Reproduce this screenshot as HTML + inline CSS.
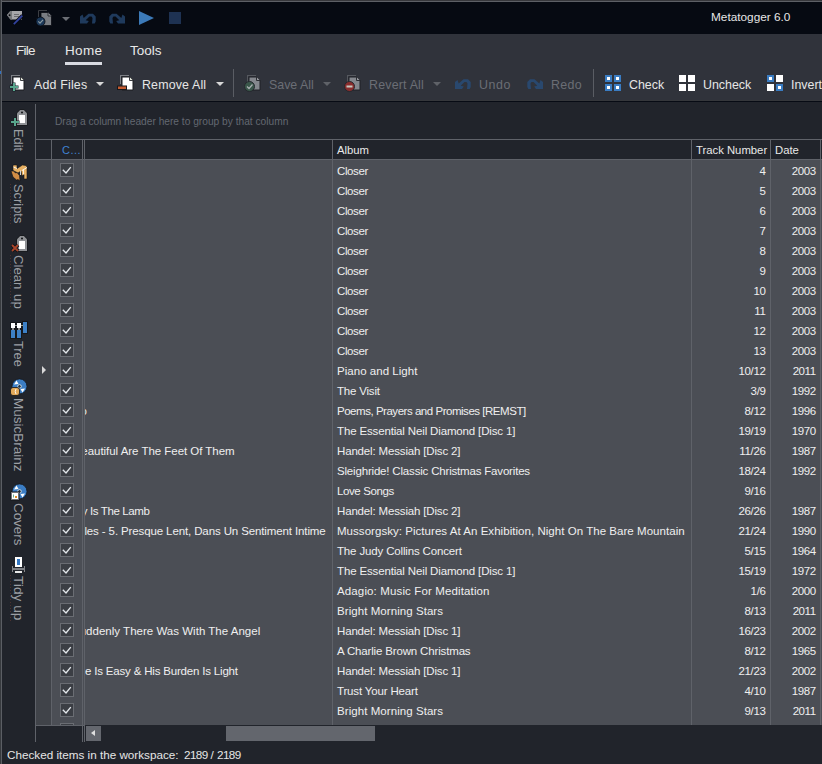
<!DOCTYPE html>
<html><head><meta charset="utf-8">
<style>
html,body{margin:0;padding:0;width:822px;height:764px;overflow:hidden;background:#21242b;}
body{position:relative;font-family:"Liberation Sans",sans-serif;color:#e4e4e4;}
.a{position:absolute;}
#titlebar{position:absolute;left:0;top:0;width:822px;height:34px;background:#060a12;}
#menubar{position:absolute;left:0;top:34px;width:822px;height:66px;background:#30333b;}
#ribline{position:absolute;left:0;top:101px;width:822px;height:1px;background:#070b14;}
#ribhl{position:absolute;left:0;top:100px;width:822px;height:1px;background:#35373b;}
#bl{position:absolute;left:0;top:0;width:1px;height:764px;background:#373a3e;}
#bl2{position:absolute;left:1px;top:0;width:1px;height:764px;background:#5b5e64;}
#bt{position:absolute;left:0;top:0;width:822px;height:1px;background:#37383c;}
#bt2{position:absolute;left:1px;top:1px;width:821px;height:1px;background:#5d6066;}
.menu{position:absolute;top:42px;font-size:13.5px;color:#e8e8e8;line-height:18px;white-space:nowrap;}
.rb{position:absolute;top:77px;font-size:12.4px;line-height:16px;white-space:nowrap;color:#e6e6e6;}
.rb.dis{color:#6b6e75;}
.tri{position:absolute;width:0;height:0;border-left:4px solid transparent;border-right:4px solid transparent;border-top:4px solid #d8d8d8;}
.tri.dis{border-top-color:#5f6268;}
.sep{position:absolute;top:69px;width:1px;height:28px;background:#5a5d64;}
.ico{position:absolute;}
/* grid */
.gl{position:absolute;background:#5f6269;}
.rows{position:absolute;left:36px;top:160px;width:786px;height:565px;background:#4b4e55;overflow:hidden;}
.ind{position:absolute;left:36px;top:160px;width:15px;height:565px;background:#404349;}
.chk{position:absolute;left:60px;width:14px;height:14px;}
.chk svg{display:block;}
.tt{position:absolute;height:20px;line-height:20px;font-size:11.5px;text-align:right;white-space:nowrap;color:#efefef;}
.al{position:absolute;left:337px;height:20px;line-height:20px;font-size:11.5px;white-space:nowrap;color:#efefef;}
.tn{position:absolute;left:691px;width:74.7px;letter-spacing:-0.3px;text-align:right;height:20px;line-height:20px;font-size:11.5px;white-space:nowrap;color:#efefef;}
.dt{position:absolute;left:771px;width:44.6px;letter-spacing:-0.45px;text-align:right;height:20px;line-height:20px;font-size:11.5px;white-space:nowrap;color:#efefef;}
.cur{position:absolute;left:42px;width:0;height:0;border-top:4px solid transparent;border-bottom:4px solid transparent;border-left:4px solid #d8d8d8;}
.hd{position:absolute;top:141px;height:19px;line-height:19px;font-size:11.3px;white-space:nowrap;color:#e8e8e8;}
.vt{position:absolute;font-size:12.5px;color:#9c9fa4;white-space:nowrap;transform-origin:0 0;transform:rotate(90deg);line-height:14px;}
</style></head><body>
<div id="titlebar"></div>
<div id="menubar"></div>
<div id="ribhl"></div>
<div id="ribline"></div>
<div id="bt"></div>
<div id="bt2"></div>
<div id="bl"></div>
<div id="bl2"></div>

<!-- title bar icons -->
<div class="a" style="left:711px;top:10px;font-size:11.8px;line-height:14px;color:#e6e6e6;">Metatogger 6.0</div>

<!-- menu -->
<div class="menu" style="left:16px;letter-spacing:-0.75px;">File</div>
<div class="menu" style="left:65px;letter-spacing:0.35px;">Home</div>
<div class="a" style="left:65px;top:62px;width:37px;height:3px;background:#d9dbe2;"></div>
<div class="menu" style="left:130px;">Tools</div>

<!-- ribbon -->
<div class="rb" style="left:34px;letter-spacing:0.18px;">Add Files</div>
<div class="tri" style="left:96px;top:82px;"></div>
<div class="rb" style="left:142px;letter-spacing:0.16px;">Remove All</div>
<div class="tri" style="left:216px;top:82px;"></div>
<div class="sep" style="left:233px;"></div>
<div class="rb dis" style="left:269px;">Save All</div>
<div class="tri dis" style="left:323px;top:82px;"></div>
<div class="rb dis" style="left:369px;letter-spacing:0.2px;">Revert All</div>
<div class="tri dis" style="left:433px;top:82px;"></div>
<div class="rb dis" style="left:479px;letter-spacing:0.55px;">Undo</div>
<div class="rb dis" style="left:551px;letter-spacing:0.3px;">Redo</div>
<div class="sep" style="left:593px;"></div>
<div class="rb" style="left:629px;">Check</div>
<div class="rb" style="left:703px;">Uncheck</div>
<div class="rb" style="left:791px;">Invert</div>

<!-- sidebar line -->
<div class="gl" style="left:35px;top:104px;width:1px;height:638px;"></div>

<!-- group panel text -->
<div class="a" style="left:55px;top:116px;font-size:10.2px;line-height:12px;color:#636871;white-space:nowrap;">Drag a column header here to group by that column</div>

<!-- grid -->
<div class="rows" style="height:565px;"></div>
<div class="ind"></div>
<div class="a" style="left:52px;top:160px;width:30px;height:565px;background:#4b4e55;"></div>
<div class="gl" style="left:36px;top:139px;width:786px;height:1px;"></div>
<div class="gl" style="left:36px;top:159px;width:786px;height:1px;"></div>
<div class="gl" style="left:36px;top:725px;width:49px;height:1px;"></div>
<div class="gl" style="left:51px;top:140px;width:1px;height:585px;"></div>
<div class="gl" style="left:82px;top:140px;width:1px;height:602px;"></div>
<div class="gl" style="left:84px;top:140px;width:1px;height:602px;"></div>
<div class="gl" style="left:332px;top:140px;width:1px;height:585px;"></div>
<div class="gl" style="left:691px;top:140px;width:1px;height:585px;"></div>
<div class="gl" style="left:770px;top:140px;width:1px;height:585px;"></div>
<div class="gl" style="left:820px;top:140px;width:1px;height:585px;"></div>

<div class="hd" style="left:62px;color:#3f82d2;font-size:11px;">C…</div>
<div class="hd" style="left:337px;">Album</div>
<div class="hd" style="left:696px;">Track Number</div>
<div class="hd" style="left:775px;">Date</div>

<div class="a" style="left:85px;top:160px;width:247px;height:565px;overflow:hidden;">
<div class="a" style="left:-85px;top:-160px;width:400px;height:800px;">
<div class="tt" style="top:441px;left:81.34px;text-align:left;letter-spacing:-0.034px">eautiful Are The Feet Of Them</div>
<div class="tt" style="top:501px;left:81.84px;text-align:left;letter-spacing:-0.392px">y Is The Lamb</div>
<div class="tt" style="top:521px;left:84.4px;text-align:left;letter-spacing:-0.118px">les - 5. Presque Lent, Dans Un Sentiment Intime</div>
<div class="tt" style="top:621px;left:79.69px;text-align:left;letter-spacing:0.016px">uddenly There Was With The Angel</div>
<div class="tt" style="top:661px;left:85.0px;text-align:left;letter-spacing:-0.184px">e Is Easy &amp; His Burden Is Light</div>
<div class="tt" style="top:401px;left:80.5px;text-align:left;letter-spacing:0px">o</div>
</div></div>
<div class="a" style="left:0;top:160px;width:822px;height:565px;overflow:hidden;"><div class="a" style="left:0;top:-160px;width:822px;height:764px;">
<div class="chk" style="top:163px"><svg width="14" height="14" viewBox="0 0 14 14"><rect x="0.5" y="0.5" width="13" height="13" fill="#3b3e44" stroke="#6a6d73"/><path d="M2.8 6.8 L6 10 L10.8 4.1" fill="none" stroke="#e4e8ec" stroke-width="1.35"/></svg></div>
<div class="al" style="top:161px;letter-spacing:-0.4px">Closer</div>
<div class="tn" style="top:161px">4</div>
<div class="dt" style="top:161px">2003</div>
<div class="chk" style="top:183px"><svg width="14" height="14" viewBox="0 0 14 14"><rect x="0.5" y="0.5" width="13" height="13" fill="#3b3e44" stroke="#6a6d73"/><path d="M2.8 6.8 L6 10 L10.8 4.1" fill="none" stroke="#e4e8ec" stroke-width="1.35"/></svg></div>
<div class="al" style="top:181px;letter-spacing:-0.4px">Closer</div>
<div class="tn" style="top:181px">5</div>
<div class="dt" style="top:181px">2003</div>
<div class="chk" style="top:203px"><svg width="14" height="14" viewBox="0 0 14 14"><rect x="0.5" y="0.5" width="13" height="13" fill="#3b3e44" stroke="#6a6d73"/><path d="M2.8 6.8 L6 10 L10.8 4.1" fill="none" stroke="#e4e8ec" stroke-width="1.35"/></svg></div>
<div class="al" style="top:201px;letter-spacing:-0.4px">Closer</div>
<div class="tn" style="top:201px">6</div>
<div class="dt" style="top:201px">2003</div>
<div class="chk" style="top:223px"><svg width="14" height="14" viewBox="0 0 14 14"><rect x="0.5" y="0.5" width="13" height="13" fill="#3b3e44" stroke="#6a6d73"/><path d="M2.8 6.8 L6 10 L10.8 4.1" fill="none" stroke="#e4e8ec" stroke-width="1.35"/></svg></div>
<div class="al" style="top:221px;letter-spacing:-0.4px">Closer</div>
<div class="tn" style="top:221px">7</div>
<div class="dt" style="top:221px">2003</div>
<div class="chk" style="top:243px"><svg width="14" height="14" viewBox="0 0 14 14"><rect x="0.5" y="0.5" width="13" height="13" fill="#3b3e44" stroke="#6a6d73"/><path d="M2.8 6.8 L6 10 L10.8 4.1" fill="none" stroke="#e4e8ec" stroke-width="1.35"/></svg></div>
<div class="al" style="top:241px;letter-spacing:-0.4px">Closer</div>
<div class="tn" style="top:241px">8</div>
<div class="dt" style="top:241px">2003</div>
<div class="chk" style="top:263px"><svg width="14" height="14" viewBox="0 0 14 14"><rect x="0.5" y="0.5" width="13" height="13" fill="#3b3e44" stroke="#6a6d73"/><path d="M2.8 6.8 L6 10 L10.8 4.1" fill="none" stroke="#e4e8ec" stroke-width="1.35"/></svg></div>
<div class="al" style="top:261px;letter-spacing:-0.4px">Closer</div>
<div class="tn" style="top:261px">9</div>
<div class="dt" style="top:261px">2003</div>
<div class="chk" style="top:283px"><svg width="14" height="14" viewBox="0 0 14 14"><rect x="0.5" y="0.5" width="13" height="13" fill="#3b3e44" stroke="#6a6d73"/><path d="M2.8 6.8 L6 10 L10.8 4.1" fill="none" stroke="#e4e8ec" stroke-width="1.35"/></svg></div>
<div class="al" style="top:281px;letter-spacing:-0.4px">Closer</div>
<div class="tn" style="top:281px">10</div>
<div class="dt" style="top:281px">2003</div>
<div class="chk" style="top:303px"><svg width="14" height="14" viewBox="0 0 14 14"><rect x="0.5" y="0.5" width="13" height="13" fill="#3b3e44" stroke="#6a6d73"/><path d="M2.8 6.8 L6 10 L10.8 4.1" fill="none" stroke="#e4e8ec" stroke-width="1.35"/></svg></div>
<div class="al" style="top:301px;letter-spacing:-0.4px">Closer</div>
<div class="tn" style="top:301px">11</div>
<div class="dt" style="top:301px">2003</div>
<div class="chk" style="top:323px"><svg width="14" height="14" viewBox="0 0 14 14"><rect x="0.5" y="0.5" width="13" height="13" fill="#3b3e44" stroke="#6a6d73"/><path d="M2.8 6.8 L6 10 L10.8 4.1" fill="none" stroke="#e4e8ec" stroke-width="1.35"/></svg></div>
<div class="al" style="top:321px;letter-spacing:-0.4px">Closer</div>
<div class="tn" style="top:321px">12</div>
<div class="dt" style="top:321px">2003</div>
<div class="chk" style="top:343px"><svg width="14" height="14" viewBox="0 0 14 14"><rect x="0.5" y="0.5" width="13" height="13" fill="#3b3e44" stroke="#6a6d73"/><path d="M2.8 6.8 L6 10 L10.8 4.1" fill="none" stroke="#e4e8ec" stroke-width="1.35"/></svg></div>
<div class="al" style="top:341px;letter-spacing:-0.4px">Closer</div>
<div class="tn" style="top:341px">13</div>
<div class="dt" style="top:341px">2003</div>
<div class="chk" style="top:363px"><svg width="14" height="14" viewBox="0 0 14 14"><rect x="0.5" y="0.5" width="13" height="13" fill="#3b3e44" stroke="#6a6d73"/><path d="M2.8 6.8 L6 10 L10.8 4.1" fill="none" stroke="#e4e8ec" stroke-width="1.35"/></svg></div>
<div class="al" style="top:361px;letter-spacing:0.029px">Piano and Light</div>
<div class="tn" style="top:361px">10/12</div>
<div class="dt" style="top:361px">2011</div>
<div class="cur" style="top:366px"></div>
<div class="chk" style="top:383px"><svg width="14" height="14" viewBox="0 0 14 14"><rect x="0.5" y="0.5" width="13" height="13" fill="#3b3e44" stroke="#6a6d73"/><path d="M2.8 6.8 L6 10 L10.8 4.1" fill="none" stroke="#e4e8ec" stroke-width="1.35"/></svg></div>
<div class="al" style="top:381px;letter-spacing:-0.2px">The Visit</div>
<div class="tn" style="top:381px">3/9</div>
<div class="dt" style="top:381px">1992</div>
<div class="chk" style="top:403px"><svg width="14" height="14" viewBox="0 0 14 14"><rect x="0.5" y="0.5" width="13" height="13" fill="#3b3e44" stroke="#6a6d73"/><path d="M2.8 6.8 L6 10 L10.8 4.1" fill="none" stroke="#e4e8ec" stroke-width="1.35"/></svg></div>
<div class="al" style="top:401px;letter-spacing:-0.471px">Poems, Prayers and Promises [REMST]</div>
<div class="tn" style="top:401px">8/12</div>
<div class="dt" style="top:401px">1996</div>
<div class="chk" style="top:423px"><svg width="14" height="14" viewBox="0 0 14 14"><rect x="0.5" y="0.5" width="13" height="13" fill="#3b3e44" stroke="#6a6d73"/><path d="M2.8 6.8 L6 10 L10.8 4.1" fill="none" stroke="#e4e8ec" stroke-width="1.35"/></svg></div>
<div class="al" style="top:421px;letter-spacing:-0.147px">The Essential Neil Diamond [Disc 1]</div>
<div class="tn" style="top:421px">19/19</div>
<div class="dt" style="top:421px">1970</div>
<div class="chk" style="top:443px"><svg width="14" height="14" viewBox="0 0 14 14"><rect x="0.5" y="0.5" width="13" height="13" fill="#3b3e44" stroke="#6a6d73"/><path d="M2.8 6.8 L6 10 L10.8 4.1" fill="none" stroke="#e4e8ec" stroke-width="1.35"/></svg></div>
<div class="al" style="top:441px;letter-spacing:-0.161px">Handel: Messiah [Disc 2]</div>
<div class="tn" style="top:441px">11/26</div>
<div class="dt" style="top:441px">1987</div>
<div class="chk" style="top:463px"><svg width="14" height="14" viewBox="0 0 14 14"><rect x="0.5" y="0.5" width="13" height="13" fill="#3b3e44" stroke="#6a6d73"/><path d="M2.8 6.8 L6 10 L10.8 4.1" fill="none" stroke="#e4e8ec" stroke-width="1.35"/></svg></div>
<div class="al" style="top:461px;letter-spacing:-0.182px">Sleighride! Classic Christmas Favorites</div>
<div class="tn" style="top:461px">18/24</div>
<div class="dt" style="top:461px">1992</div>
<div class="chk" style="top:483px"><svg width="14" height="14" viewBox="0 0 14 14"><rect x="0.5" y="0.5" width="13" height="13" fill="#3b3e44" stroke="#6a6d73"/><path d="M2.8 6.8 L6 10 L10.8 4.1" fill="none" stroke="#e4e8ec" stroke-width="1.35"/></svg></div>
<div class="al" style="top:481px;letter-spacing:-0.4px">Love Songs</div>
<div class="tn" style="top:481px">9/16</div>
<div class="chk" style="top:503px"><svg width="14" height="14" viewBox="0 0 14 14"><rect x="0.5" y="0.5" width="13" height="13" fill="#3b3e44" stroke="#6a6d73"/><path d="M2.8 6.8 L6 10 L10.8 4.1" fill="none" stroke="#e4e8ec" stroke-width="1.35"/></svg></div>
<div class="al" style="top:501px;letter-spacing:-0.161px">Handel: Messiah [Disc 2]</div>
<div class="tn" style="top:501px">26/26</div>
<div class="dt" style="top:501px">1987</div>
<div class="chk" style="top:523px"><svg width="14" height="14" viewBox="0 0 14 14"><rect x="0.5" y="0.5" width="13" height="13" fill="#3b3e44" stroke="#6a6d73"/><path d="M2.8 6.8 L6 10 L10.8 4.1" fill="none" stroke="#e4e8ec" stroke-width="1.35"/></svg></div>
<div class="al" style="top:521px;letter-spacing:0.042px">Mussorgsky: Pictures At An Exhibition, Night On The Bare Mountain</div>
<div class="tn" style="top:521px">21/24</div>
<div class="dt" style="top:521px">1990</div>
<div class="chk" style="top:543px"><svg width="14" height="14" viewBox="0 0 14 14"><rect x="0.5" y="0.5" width="13" height="13" fill="#3b3e44" stroke="#6a6d73"/><path d="M2.8 6.8 L6 10 L10.8 4.1" fill="none" stroke="#e4e8ec" stroke-width="1.35"/></svg></div>
<div class="al" style="top:541px;letter-spacing:-0.152px">The Judy Collins Concert</div>
<div class="tn" style="top:541px">5/15</div>
<div class="dt" style="top:541px">1964</div>
<div class="chk" style="top:563px"><svg width="14" height="14" viewBox="0 0 14 14"><rect x="0.5" y="0.5" width="13" height="13" fill="#3b3e44" stroke="#6a6d73"/><path d="M2.8 6.8 L6 10 L10.8 4.1" fill="none" stroke="#e4e8ec" stroke-width="1.35"/></svg></div>
<div class="al" style="top:561px;letter-spacing:-0.147px">The Essential Neil Diamond [Disc 1]</div>
<div class="tn" style="top:561px">15/19</div>
<div class="dt" style="top:561px">1972</div>
<div class="chk" style="top:583px"><svg width="14" height="14" viewBox="0 0 14 14"><rect x="0.5" y="0.5" width="13" height="13" fill="#3b3e44" stroke="#6a6d73"/><path d="M2.8 6.8 L6 10 L10.8 4.1" fill="none" stroke="#e4e8ec" stroke-width="1.35"/></svg></div>
<div class="al" style="top:581px;letter-spacing:0.133px">Adagio: Music For Meditation</div>
<div class="tn" style="top:581px">1/6</div>
<div class="dt" style="top:581px">2000</div>
<div class="chk" style="top:603px"><svg width="14" height="14" viewBox="0 0 14 14"><rect x="0.5" y="0.5" width="13" height="13" fill="#3b3e44" stroke="#6a6d73"/><path d="M2.8 6.8 L6 10 L10.8 4.1" fill="none" stroke="#e4e8ec" stroke-width="1.35"/></svg></div>
<div class="al" style="top:601px;letter-spacing:0.063px">Bright Morning Stars</div>
<div class="tn" style="top:601px">8/13</div>
<div class="dt" style="top:601px">2011</div>
<div class="chk" style="top:623px"><svg width="14" height="14" viewBox="0 0 14 14"><rect x="0.5" y="0.5" width="13" height="13" fill="#3b3e44" stroke="#6a6d73"/><path d="M2.8 6.8 L6 10 L10.8 4.1" fill="none" stroke="#e4e8ec" stroke-width="1.35"/></svg></div>
<div class="al" style="top:621px;letter-spacing:-0.161px">Handel: Messiah [Disc 1]</div>
<div class="tn" style="top:621px">16/23</div>
<div class="dt" style="top:621px">2002</div>
<div class="chk" style="top:643px"><svg width="14" height="14" viewBox="0 0 14 14"><rect x="0.5" y="0.5" width="13" height="13" fill="#3b3e44" stroke="#6a6d73"/><path d="M2.8 6.8 L6 10 L10.8 4.1" fill="none" stroke="#e4e8ec" stroke-width="1.35"/></svg></div>
<div class="al" style="top:641px;letter-spacing:-0.158px">A Charlie Brown Christmas</div>
<div class="tn" style="top:641px">8/12</div>
<div class="dt" style="top:641px">1965</div>
<div class="chk" style="top:663px"><svg width="14" height="14" viewBox="0 0 14 14"><rect x="0.5" y="0.5" width="13" height="13" fill="#3b3e44" stroke="#6a6d73"/><path d="M2.8 6.8 L6 10 L10.8 4.1" fill="none" stroke="#e4e8ec" stroke-width="1.35"/></svg></div>
<div class="al" style="top:661px;letter-spacing:-0.161px">Handel: Messiah [Disc 1]</div>
<div class="tn" style="top:661px">21/23</div>
<div class="dt" style="top:661px">2002</div>
<div class="chk" style="top:683px"><svg width="14" height="14" viewBox="0 0 14 14"><rect x="0.5" y="0.5" width="13" height="13" fill="#3b3e44" stroke="#6a6d73"/><path d="M2.8 6.8 L6 10 L10.8 4.1" fill="none" stroke="#e4e8ec" stroke-width="1.35"/></svg></div>
<div class="al" style="top:681px;letter-spacing:-0.16px">Trust Your Heart</div>
<div class="tn" style="top:681px">4/10</div>
<div class="dt" style="top:681px">1987</div>
<div class="chk" style="top:703px"><svg width="14" height="14" viewBox="0 0 14 14"><rect x="0.5" y="0.5" width="13" height="13" fill="#3b3e44" stroke="#6a6d73"/><path d="M2.8 6.8 L6 10 L10.8 4.1" fill="none" stroke="#e4e8ec" stroke-width="1.35"/></svg></div>
<div class="al" style="top:701px;letter-spacing:0.063px">Bright Morning Stars</div>
<div class="tn" style="top:701px">9/13</div>
<div class="dt" style="top:701px">2011</div>
<div class="chk" style="top:723px"><svg width="14" height="14" viewBox="0 0 14 14"><rect x="0.5" y="0.5" width="13" height="13" fill="#3b3e44" stroke="#6a6d73"/><path d="M2.8 6.8 L6 10 L10.8 4.1" fill="none" stroke="#e4e8ec" stroke-width="1.35"/></svg></div>
</div></div>

<!-- scrollbar -->
<div class="a" style="left:86px;top:726px;width:15px;height:15px;background:#64676e;"></div>
<div class="a" style="left:91px;top:730px;width:0;height:0;border-top:3.5px solid transparent;border-bottom:3.5px solid transparent;border-right:4.5px solid #e0e0e0;"></div>
<div class="a" style="left:226px;top:726px;width:149px;height:15px;background:#63666d;"></div>

<!-- status -->
<div class="a" style="left:7px;top:748px;font-size:11.7px;line-height:14px;color:#e6e6e6;white-space:nowrap;">Checked items in the workspace:</div>
<div class="a" style="left:184px;top:748px;font-size:11.7px;line-height:14px;color:#e6e6e6;white-space:nowrap;letter-spacing:-0.6px;">2189</div>
<div class="a" style="left:210.5px;top:748px;font-size:11.7px;line-height:14px;color:#e6e6e6;white-space:nowrap;">/</div>
<div class="a" style="left:217px;top:748px;font-size:11.7px;line-height:14px;color:#e6e6e6;white-space:nowrap;letter-spacing:-0.6px;">2189</div>

<!-- vertical tabs -->
<div class="a" style="left:10px;top:184px;width:1px;height:40px;background:repeating-linear-gradient(to bottom,#4a3130 0,#4a3130 1px,transparent 1px,transparent 3px);"></div>
<div class="a" style="left:10px;top:255px;width:1px;height:54px;background:repeating-linear-gradient(to bottom,#4a3130 0,#4a3130 1px,transparent 1px,transparent 3px);"></div>
<div class="a" style="left:10px;top:575px;width:1px;height:46px;background:repeating-linear-gradient(to bottom,#4a3130 0,#4a3130 1px,transparent 1px,transparent 3px);"></div>

<div class="vt" style="left:25px;top:129px;font-size:12.8px;">Edit</div>
<div class="vt" style="left:25px;top:184px;font-size:12.9px;">Scripts</div>
<div class="vt" style="left:25px;top:255px;font-size:13.2px;word-spacing:1px;">Clean up</div>
<div class="vt" style="left:25px;top:341px;font-size:12.8px;">Tree</div>
<div class="vt" style="left:25px;top:398px;font-size:13.5px;">MusicBrainz</div>
<div class="vt" style="left:25px;top:503px;font-size:13.4px;">Covers</div>
<div class="vt" style="left:25px;top:576px;font-size:13.7px;">Tidy up</div>
<svg class="a" style="left:0;top:0;" width="822" height="764" viewBox="0 0 822 764">
<defs>
  <path id="undo" d="M5,11 L7.5,9 L8.7,12.4 L13.5,8.2 L18,8.2 L20.7,11 L20.7,16 L19.7,18 L17,18 L17.5,12.5 L16.5,11 L14.5,11 L10.7,14.8 L13.8,15.4 L12,18 L5,18 Z"/>
  <g id="doc">
    <path d="M0.5,9 V0.5 H9" fill="none" stroke="#7d8085" stroke-width="1" shape-rendering="crispEdges"/>
    <path d="M2.5,2.5 H10 L13.5,6 V15.5 H2.5 Z" fill="#ffffff" stroke="#1a1c20" stroke-width="1"/>
    <path d="M10,2.5 V6 H13.5" fill="#e8ecdf" stroke="#3a3c40" stroke-width="1"/>
  </g>
  <g id="ddoc">
    <path d="M0.5,7 V0.5 H9" fill="none" stroke="#55585e" stroke-width="1" shape-rendering="crispEdges"/>
    <path d="M2.5,2.5 H10 L13.5,6 V15.5 H2.5 Z" fill="#85888e" stroke="#1f2126" stroke-width="1"/>
    <path d="M10,2.5 V6 H13.5" fill="#9a9da2" stroke="#2c2e33" stroke-width="1"/>
  </g>
  <g id="tag">
    <path d="M-0.8,3 L3,-0.8 H7 L10.8,3 V15.8 H-0.8 Z" fill="#17191d"/>
    <path d="M0,3.2 L3.2,0 H6.8 L10,3.2 V15 H0 Z" fill="#8f9195"/>
    <rect x="2" y="5" width="6" height="8" fill="#ffffff"/>
    <circle cx="5" cy="2.6" r="1" fill="#101216"/>
  </g>
  <g id="sq"><rect x="0" y="0" width="7" height="7" fill="#3a7cc2"/><rect x="2" y="2" width="3" height="3" fill="#ffffff"/></g>
  <g id="wsq"><rect x="0" y="0" width="7" height="7" fill="#ffffff"/></g>
  <g id="cd">
    <circle cx="0" cy="0" r="7.5" fill="#3b7dc4" stroke="#15181d" stroke-width="0.8"/>
    <path d="M-5.5,-2 L-3,-6 L-1,-2.5 Z" fill="#ffffff"/>
    <path d="M5.5,2 L3,6 L1,2.5 Z" fill="#ffffff"/>
    <circle cx="0" cy="0" r="1.8" fill="#1c2a3a" stroke="#d8e8f0" stroke-width="0.9"/>
  </g>
</defs>
<!-- title bar icons -->
<g>
  <path d="M7,15 L10.3,11 H22 V19.5 H10.5 Z" fill="#a6a6aa"/>
  <path d="M7,15 L10.3,11 H12 V19.5 H10.5 Z" fill="#75777b"/>
  <circle cx="9.6" cy="15.2" r="0.9" fill="#08090d"/>
  <rect x="14" y="14" width="5" height="1" fill="#6a6b70"/>
  <rect x="14" y="16" width="5" height="1" fill="#6a6b70"/>
  <path d="M13.5,24.5 L22.5,15.5" stroke="#060a12" stroke-width="3.4"/>
  <path d="M13.8,24.2 L22.3,15.7" stroke="#3242a0" stroke-width="1.8"/>
</g>
<g transform="translate(38,10)">
  <path d="M0.5,7 V0.5 H9" fill="none" stroke="#3c3e43" stroke-width="1"/>
  <path d="M3,2.5 H10 L13.5,6 V15.5 H3 Z" fill="#7a7d82" stroke="#0a0d13" stroke-width="0.8"/>
  <path d="M10,2.5 V6 H13.5" fill="#8e9196" stroke="#1c1e23" stroke-width="0.8"/>
  <circle cx="2.5" cy="11.5" r="4.5" fill="#1b3757" stroke="#06090f" stroke-width="0.8"/>
  <path d="M0.3,11.4 L2,13.2 L5,9.8" fill="none" stroke="#8a9aa2" stroke-width="1.2"/>
</g>
<path d="M62,17 H70 L66,21 Z" fill="#6b6e74"/>
<use href="#undo" transform="translate(75,5.5)" fill="#1f3a5c"/>
<use href="#undo" transform="translate(130,5.5) scale(-1,1)" fill="#1f3a5c"/>
<path d="M139,11 L154,18 L139,25 Z" fill="#3c7ab8"/>
<rect x="169" y="12" width="12" height="12" fill="#1e3252"/>

<!-- ribbon icons -->
<use href="#doc" transform="translate(10.5,74.5)"/>
<g transform="translate(0,0)">
  <path d="M12.5,82.5 h3 v3 h3 v3 h-3 v3 h-3 v-3 h-3 v-3 h3 Z" fill="#19222a"/>
  <rect x="13" y="83" width="2" height="8" fill="#58a58c"/>
  <rect x="10" y="86" width="8" height="2" fill="#58a58c"/>
</g>
<use href="#doc" transform="translate(119.5,74.5)"/>
<rect x="117" y="85.5" width="10" height="4.5" fill="#16181c"/>
<rect x="118" y="86.5" width="8" height="2.5" fill="#c35a2f"/>
<use href="#ddoc" transform="translate(246.5,74.5)"/>
<circle cx="249.5" cy="86.5" r="5" fill="#3a564a" stroke="#25282e" stroke-width="1"/>
<path d="M247,86.5 L249,88.5 L252.5,84.5" fill="none" stroke="#aab0b2" stroke-width="1.2"/>
<use href="#ddoc" transform="translate(346.5,74.5)"/>
<circle cx="349.5" cy="86.5" r="5" fill="#8a2d2d" stroke="#25282e" stroke-width="1"/>
<rect x="346.5" y="85.5" width="6" height="2" fill="#c5c8c0"/>
<path d="M62,0 H70 L66,4 Z" fill="none"/>
<use href="#undo" transform="translate(450,71)" fill="#29486e"/>
<use href="#undo" transform="translate(548,71) scale(-1,1)" fill="#29486e"/>

<use href="#sq" x="605" y="75"/><use href="#sq" x="614" y="75"/><use href="#sq" x="605" y="84"/><use href="#sq" x="614" y="84"/>
<use href="#wsq" x="679" y="75"/><use href="#wsq" x="688" y="75"/><use href="#wsq" x="679" y="84"/><use href="#wsq" x="688" y="84"/>
<use href="#sq" x="767" y="75"/><use href="#wsq" x="776" y="75"/><use href="#wsq" x="767" y="84"/><use href="#sq" x="776" y="84"/>

<!-- sidebar icons -->
<use href="#tag" transform="translate(17,110)"/>
<path d="M13.5,117.5 h3 v3 h3 v3 h-3 v3 h-3 v-3 h-3 v-3 h3 Z" fill="#181b20"/>
<rect x="14" y="118" width="2" height="8" fill="#58a58c"/>
<rect x="11" y="121" width="8" height="2" fill="#58a58c"/>

<g transform="translate(0,0)">
  <path d="M13,165 H17 V168.5 L22.5,165 L26,165.5 L27,167 V179 H24 V174.5 L22,176 L21,171 L18,173 L13,170.5 Z" fill="#e7b062" stroke="#111318" stroke-width="0.6"/>
  <path d="M13.5,167 L17,168.5 M22,170.5 L27,167.5" stroke="#ffffff" stroke-width="0.9" fill="none"/>
  <path d="M20.5,170.5 V175 M23.5,170 V174.5" stroke="#ffffff" stroke-width="0.8" fill="none"/>
  <path d="M11,171 L13.5,171 L15.5,173 L17,172.5 L19.5,175.5 L20,181 L18,179.5 L16.5,180 L13,177 L12,174 Z" fill="#d28d45" stroke="#111318" stroke-width="0.6"/>
</g>

<use href="#tag" transform="translate(17,236)"/>
<g stroke="#121418" stroke-width="3.6"><path d="M12,245 L18,251 M18,245 L12,251"/></g>
<g stroke="#a9452b" stroke-width="1.8"><path d="M12,245 L18,251 M18,245 L12,251"/></g>

<g fill="#15171b"><rect x="10" y="322" width="12" height="7"/><rect x="10" y="329" width="6" height="10"/><rect x="16" y="329" width="6" height="10"/><rect x="22" y="321" width="6" height="13"/></g>
<rect x="11" y="323" width="4" height="5" fill="#ffffff"/>
<rect x="17" y="323" width="4" height="5" fill="#ffffff"/>
<rect x="15" y="325" width="2" height="1" fill="#9a9a9a"/>
<rect x="21" y="325" width="2" height="1" fill="#a09a80"/>
<rect x="12" y="328" width="2" height="2" fill="#8a8a8a"/>
<rect x="18" y="328" width="2" height="2" fill="#8a8a8a"/>
<rect x="11" y="330" width="4" height="8" fill="#3d80c6"/>
<rect x="17" y="330" width="4" height="8" fill="#3d80c6"/>
<rect x="23" y="322" width="4" height="11" fill="#3d80c6"/>

<use href="#cd" transform="translate(19.5,386.4)"/>
<rect x="10.5" y="387.5" width="9" height="8" rx="2.5" fill="#e2a95a" stroke="#111318" stroke-width="0.8"/>
<path d="M16,389 Q14.5,391.5 16,394" stroke="#ffffff" stroke-width="0.9" fill="none"/>

<use href="#cd" transform="translate(19.5,491.4)"/>
<rect x="10.5" y="491.5" width="9" height="9" fill="#15171b"/>
<rect x="11.5" y="492.5" width="7" height="7" fill="#ffffff" stroke="#707276" stroke-width="1"/>
<rect x="13" y="494.5" width="1" height="3" fill="#6ab090"/>
<rect x="15" y="496" width="2" height="2" fill="#e0902a"/>

<rect x="15" y="557" width="7" height="10" fill="#ffffff"/>
<rect x="17" y="559" width="3" height="6" fill="#3478c4"/>
<rect x="12" y="566" width="1" height="6" fill="#85878b"/>
<rect x="24" y="566" width="1" height="6" fill="#85878b"/>
<rect x="12" y="568" width="13" height="2" fill="#7f8186"/>
<rect x="15" y="571" width="7" height="2" fill="#e8e8e8"/>
</svg>

<div class="a" style="left:0;top:71px;width:1px;height:3px;background:#2f6fc0;"></div>
</body></html>
